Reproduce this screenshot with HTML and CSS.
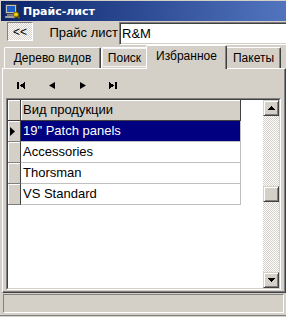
FILE: index.html
```html
<!DOCTYPE html>
<html lang="ru">
<head>
  <meta charset="UTF-8">
  <title>Прайс-лист</title>
  <link rel="stylesheet" href="styles.css">
</head>
<body>
  <div class="window">
    <div class="titlebar">
      <svg class="app-icon" width="16" height="16" viewBox="0 0 16 16">
        <rect x="1.5" y="1.5" width="11" height="9" fill="#c0c0c0" stroke="#404040"/>
        <rect x="3" y="3" width="8" height="6" fill="#1a5fc8"/>
        <rect x="3" y="11" width="8" height="2" fill="#808080"/>
        <rect x="1" y="13" width="10" height="2" fill="#c0c0c0" stroke="#404040" stroke-width="0.5"/>
        <circle cx="12" cy="11.5" r="2.5" fill="#e8d000" stroke="#7a6000"/>
        <path d="M13.5 13 L15.5 15.5" stroke="#7a6000" stroke-width="1.5"/>
      </svg>
      <span class="title">Прайс-лист</span>
    </div>

    <div class="toolbar">
      <button class="back-btn">&lt;&lt;</button>
      <label class="price-label" for="price">Прайс лист</label>
      <input class="price-input" id="price" type="text" value="R&amp;M">
    </div>

    <div class="tabs">
      <div class="tab tab-tree">Дерево видов</div>
      <div class="tab tab-search">Поиск</div>
      <div class="tab tab-fav tab-active">Избранное</div>
      <div class="tab tab-packs">Пакеты</div>
    </div>

    <div class="panel">
      <div class="navigator">
        <button class="nav-btn" title="Первая">
          <svg width="10" height="7" viewBox="0 0 10 7" shape-rendering="crispEdges"><rect x="0" y="0" width="2" height="7"/><polygon points="3,3.5 8,0 8,7"/></svg>
        </button>
        <button class="nav-btn" title="Предыдущая">
          <svg width="7" height="7" viewBox="0 0 7 7"><polygon points="0,3.5 6,0 6,7"/></svg>
        </button>
        <button class="nav-btn" title="Следующая">
          <svg width="7" height="7" viewBox="0 0 7 7"><polygon points="7,3.5 1,0 1,7"/></svg>
        </button>
        <button class="nav-btn" title="Последняя">
          <svg width="10" height="7" viewBox="0 0 10 7" shape-rendering="crispEdges"><polygon points="7,3.5 2,0 2,7"/><rect x="8" y="0" width="2" height="7"/></svg>
        </button>
      </div>

      <div class="grid">
        <div class="grid-inner">
          <div class="table">
            <div class="row row-header">
              <div class="ind"></div>
              <div class="cell">Вид продукции</div>
            </div>
            <div class="row row-selected">
              <div class="ind">
                <svg width="5" height="9" viewBox="0 0 5 9"><polygon points="0,0 5,4.5 0,9"/></svg>
              </div>
              <div class="cell">19" Patch panels</div>
            </div>
            <div class="row">
              <div class="ind"></div>
              <div class="cell">Accessories</div>
            </div>
            <div class="row">
              <div class="ind"></div>
              <div class="cell">Thorsman</div>
            </div>
            <div class="row">
              <div class="ind"></div>
              <div class="cell">VS Standard</div>
            </div>
          </div>

          <div class="scrollbar">
            <div class="sb-btn">
              <svg width="7" height="4" viewBox="0 0 7 4" shape-rendering="crispEdges"><polygon points="3.5,0 7,4 0,4"/></svg>
            </div>
            <div class="sb-track">
              <div class="sb-btn sb-thumb"></div>
            </div>
            <div class="sb-btn">
              <svg width="7" height="4" viewBox="0 0 7 4" shape-rendering="crispEdges"><polygon points="0,0 7,0 3.5,4"/></svg>
            </div>
          </div>
        </div>
      </div>
    </div>

    <div class="statusbar">
      <div class="status-panel"></div>
    </div>
  </div>
</body>
</html>
```

FILE: styles.css
```css
body {
  margin: 0;
  background-color: #d4d0c8;
  font-family: 'Liberation Sans', Arial, sans-serif;
  font-size: 12px;
  color: #000;
}

.window {
  width: 286px;
  height: 317px;
  overflow: hidden;
  display: flex;
  flex-direction: column;
  background-color: #d4d0c8;
}

/* title bar */
.titlebar {
  flex: none;
  height: 20px;
  margin: 1px 0 0 1px;
  padding-left: 3px;
  display: flex;
  align-items: center;
  gap: 3px;
  background: linear-gradient(to right, #0a246a, #5274bf);
  color: white;
  font-family: 'DejaVu Sans', sans-serif;
  font-weight: bold;
  font-size: 11px;
}

.app-icon {
  flex: none;
}

/* price list row */
.toolbar {
  flex: none;
  height: 24px;
  padding-top: 1px;
  box-sizing: border-box;
  display: flex;
  align-items: flex-start;
  font-size: 13px;
}

.back-btn {
  flex: none;
  width: 26px;
  height: 19px;
  margin-left: 7px;
  padding: 0;
  border: 1px solid;
  border-color: #808080 #fff #fff #808080;
  background: repeating-conic-gradient(#fff 0 25%, #d4d0c8 0 50%) 0 0 / 2px 2px;
  font-family: inherit;
  font-size: 12px;
  color: #000;
  line-height: 16px;
}

.price-label {
  flex: none;
  width: 86px;
  padding-right: 1px;
  box-sizing: border-box;
  text-align: right;
  line-height: 22px;
}

.price-input {
  flex: none;
  width: 172px;
  height: 23px;
  margin: 0;
  padding: 0 2px;
  box-sizing: border-box;
  border: 1px solid;
  border-color: #808080 #fff #fff #808080;
  box-shadow: inset 1px 1px #404040, inset -1px -1px #d4d0c8;
  font-family: inherit;
  font-size: 13px;
  outline: none;
}

/* tabs */
.tabs {
  flex: none;
  height: 23px;
  padding-left: 4px;
  display: flex;
  align-items: flex-end;
  position: relative;
  z-index: 1;
}

.tab {
  height: 21px;
  padding-top: 3px;
  box-sizing: border-box;
  border: 1px solid;
  border-color: #fff #404040 transparent #fff;
  border-bottom: none;
  border-radius: 2px 2px 0 0;
  box-shadow: inset -1px 0 #808080;
  background-color: #d4d0c8;
  text-align: center;
  line-height: 14px;
  white-space: nowrap;
}

.tab-tree { width: 97px; }
.tab-search {
  width: 47px;
  outline: 1px solid #f4f4f4;
  outline-offset: -2px;
}
.tab-fav { width: 77px; }
.tab-packs { width: 55px; margin-left: 1px; }

.tab-active {
  width: 81px;
  height: 24px;
  margin: 0 -2px -1px -2px;
  position: relative;
  z-index: 2;
}

/* page panel */
.panel {
  flex: none;
  height: 225px;
  margin-left: 2px;
  padding-top: 1px;
  box-sizing: border-box;
  border: 1px solid;
  border-color: #fff #404040 #404040 #fff;
  box-shadow: inset -1px -1px #808080;
}

.navigator {
  height: 28px;
  padding: 2px 0 0 4px;
  box-sizing: border-box;
  display: flex;
}

.nav-btn {
  width: 30px;
  height: 26px;
  padding: 0;
  border: none;
  background: transparent;
  display: flex;
  align-items: center;
  justify-content: center;
}

.nav-btn svg {
  fill: #000;
}

/* data grid */
.grid {
  width: 275px;
  height: 192px;
  margin-left: 3px;
  box-sizing: border-box;
  border: 1px solid;
  border-color: #808080 #fff #fff #808080;
  font-size: 13px;
}

.grid-inner {
  height: 100%;
  box-sizing: border-box;
  border: 1px solid;
  border-color: #404040 #d4d0c8 #d4d0c8 #404040;
  background-color: white;
  display: flex;
}

.table {
  flex: 1;
}

.row {
  display: flex;
  height: 21px;
}

.ind {
  width: 13px;
  box-sizing: border-box;
  border-right: 1px solid #404040;
  border-bottom: 1px solid #808080;
  box-shadow: inset 1px 1px #fff;
  background-color: #d4d0c8;
  display: flex;
  align-items: center;
  padding-left: 2px;
}

.cell {
  width: 220px;
  box-sizing: border-box;
  padding-left: 2px;
  border-right: 1px solid #c0c0c0;
  border-bottom: 1px solid #c0c0c0;
  line-height: 20px;
  white-space: nowrap;
}

.row-header .ind,
.row-header .cell {
  border-right-color: #404040;
  border-bottom-color: #404040;
  box-shadow: inset 1px 1px #fff;
  background-color: #d4d0c8;
}

.row-selected .cell {
  background-color: #000080;
  color: white;
}

/* scrollbar */
.scrollbar {
  width: 16px;
  display: flex;
  flex-direction: column;
}

.sb-btn {
  width: 16px;
  height: 16px;
  flex: none;
  box-sizing: border-box;
  border: 1px solid;
  border-color: #d4d0c8 #404040 #404040 #d4d0c8;
  box-shadow: inset 1px 1px #fff, inset -1px -1px #808080;
  background-color: #d4d0c8;
  display: flex;
  align-items: center;
  justify-content: center;
}

.sb-track {
  flex: 1;
  background: repeating-conic-gradient(#d4d0c8 0 25%, #fff 0 50%) 0 0 / 2px 2px;
}

.sb-thumb {
  margin-top: 70px;
}

/* status bar */
.statusbar {
  flex: none;
  height: 23px;
  padding: 1px 2px 0 3px;
  box-sizing: border-box;
  border-bottom: 1px solid #808080;
}

.status-panel {
  height: 19px;
  box-sizing: border-box;
  border: 1px solid;
  border-color: #808080 #fff #fff #808080;
}
```
